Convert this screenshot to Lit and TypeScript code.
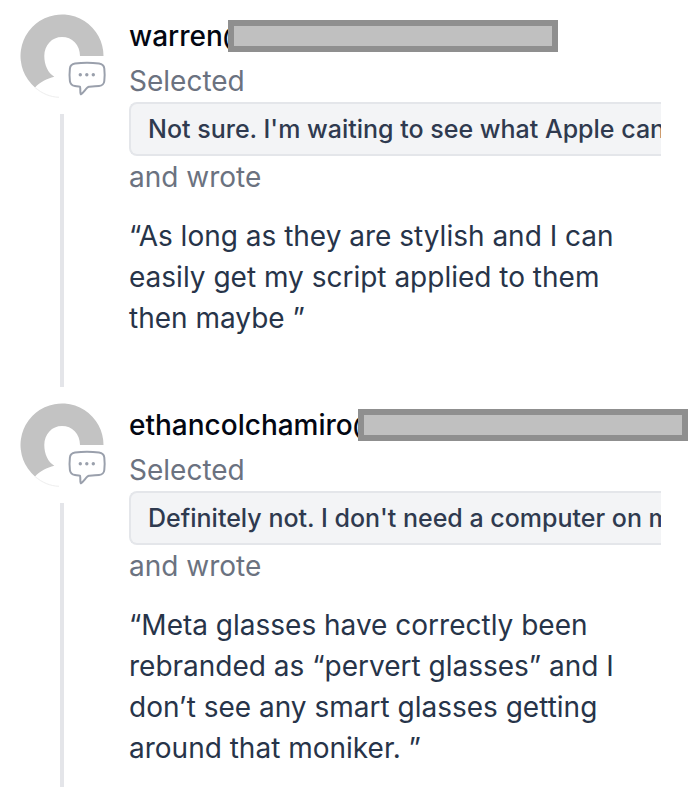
import { LitElement, html, css, svg } from "lit";
import { customElement, property } from "lit/decorators.js";

interface Comment {
  name: string;
  choice: string;
  quote: string;
}

const COMMENTS: Comment[] = [
  {
    name: "warren@",
    choice: "Not sure. I'm waiting to see what Apple can",
    quote: "“As long as they are stylish and I can easily get my script applied to them then maybe ”",
  },
  {
    name: "ethancolchamiro@",
    choice: "Definitely not. I don't need a computer on m",
    quote: "“Meta glasses have correctly been rebranded as “pervert glasses” and I don’t see any smart glasses getting around that moniker. ”",
  },
];

const avatar = svg`
  <path d="M15 73.500A41.500 41.500 0 1 1 83.500 42H60C60 30.500 52 23 42 23C32 23 24.300 31 24.300 42C24.300 51 28 59 34.300 62.700C27 64.500 20 68 15 73.500Z" fill="#c3c3c3"/>
  <path d="M15 73.500C22 79.500 30 83 39 83.300" fill="none" stroke="#eeeeee" stroke-width="1"/>
  <path d="M55 49.500C62 48.500 72 48.500 79 49.500C82.300 50 84 51.800 84.300 54.500C84.800 59 84.800 63 84.300 67C84 70 82 71.700 79 72.100C75.500 72.500 72 72.600 69 72.700C66.500 73 64 78.500 60.800 80.300C59.800 78.500 60.800 75.500 60 72.700C58 72.500 56.500 72.400 55 72.100C52 71.500 50.200 70 49.900 67C49.400 63 49.400 59 49.900 54.500C50.200 51.800 51.800 50 55 49.500Z" fill="#fff" stroke="#9aa0ac" stroke-width="2" stroke-linejoin="round"/>
  <circle cx="60.300" cy="60.700" r="1.700" fill="#9aa0ac"/>
  <circle cx="66.800" cy="60.700" r="1.700" fill="#9aa0ac"/>
  <circle cx="73.300" cy="60.700" r="1.700" fill="#9aa0ac"/>
`;

@customElement("comment-entry")
export class CommentEntry extends LitElement {
  @property({ attribute: false }) comment!: Comment;

  static styles = css`
    :host {
      display: grid;
      grid-template-columns: 84px minmax(0, 1fr);
      column-gap: 25px;
    }
    .rail {
      display: flex;
      flex-direction: column;
      align-items: center;
      gap: 16px;
    }
    .avatar {
      width: 84px;
      height: 84px;
      overflow: visible;
    }
    .line {
      flex: 1;
      width: 4px;
      background: #e4e5e9;
    }
    .body {
      padding-bottom: 48px;
    }
    .head {
      display: flex;
      align-items: center;
      height: 44px;
      margin-bottom: 2px;
    }
    .name {
      margin: 0;
      font-size: 28px;
      line-height: 44px;
      font-weight: 500;
      color: #030712;
    }
    .redaction {
      flex: none;
      box-sizing: border-box;
      width: 330px;
      height: 32px;
      margin-left: -22px;
      border: 6px solid #8f8f8f;
      background: #c0c0c0;
    }
    .label {
      margin: 0;
      font-size: 28px;
      line-height: 42px;
      color: #6b7280;
    }
    .choice {
      margin: 0 39px 0 0;
      padding: 0 0 0 17px;
      border: 2px solid #e4e6ea;
      border-right: 0;
      border-radius: 8px 0 0 8px;
      background: #f3f4f6;
      font-size: 25px;
      line-height: 50px;
      font-weight: 500;
      color: #2f3a4f;
      white-space: nowrap;
      overflow: hidden;
    }
    .quote {
      margin: 18px 60px 0 0;
      font-size: 28px;
      line-height: 41px;
      color: #273449;
    }
  `;

  render() {
    return html`
      <div class="rail">
        <svg class="avatar" viewBox="0 0 84 84" aria-hidden="true">${avatar}</svg>
        <div class="line"></div>
      </div>
      <div class="body">
        <div class="head">
          <h2 class="name">${this.comment.name}</h2>
          <span class="redaction"></span>
        </div>
        <p class="label">Selected</p>
        <p class="choice">${this.comment.choice}</p>
        <p class="label">and wrote</p>
        <p class="quote">${this.comment.quote}</p>
      </div>
    `;
  }
}

@customElement("app-root")
export class AppRoot extends LitElement {
  static styles = css`
    :host {
      display: block;
      box-sizing: border-box;
      height: 100vh;
      overflow: hidden;
      padding: 14px 0 0 20px;
      background: #fff;
      font-family: Inter, "Liberation Sans", sans-serif;
      font-optical-sizing: none;
    }
    .feed {
      display: flex;
      flex-direction: column;
      gap: 16px;
    }
  `;

  render() {
    return html`
      <main class="feed">
        ${COMMENTS.map((c) => html`<comment-entry .comment=${c}></comment-entry>`)}
      </main>
    `;
  }
}
